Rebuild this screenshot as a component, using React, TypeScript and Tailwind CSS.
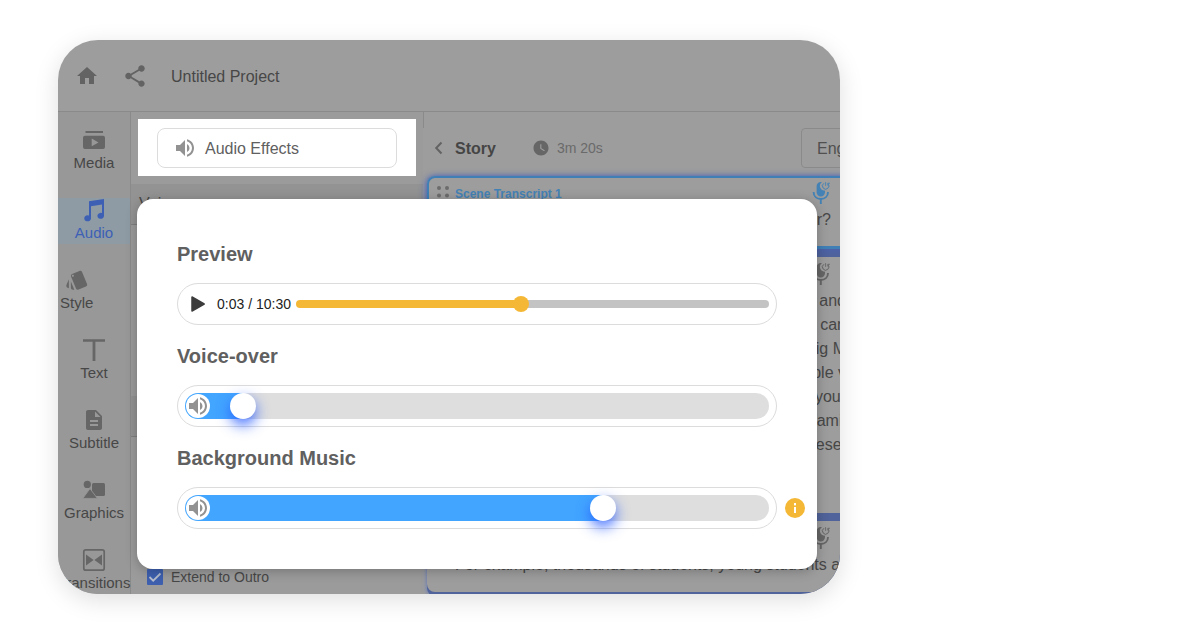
import { useState } from "react";
import type { CSSProperties, ReactNode } from "react";
import { MdDescription, MdHome, MdShare, MdStyle, MdVolumeUp, MdWatchLater } from "react-icons/md";

function Glyph({ children }: { children: ReactNode }) {
  return (
    <svg viewBox="0 0 24 24" className="size-6" fill="currentColor" aria-hidden="true">
      {children}
    </svg>
  );
}

const tools: { label: string; icon: ReactNode; active?: boolean; narrow?: boolean }[] = [
  {
    label: "Media",
    icon: (
      <Glyph>
        <rect x="3.5" y="3" width="17.5" height="2" />
        <path
          fillRule="evenodd"
          d="M3 7.7h18a2 2 0 0 1 2 2V19a2 2 0 0 1-2 2H3a2 2 0 0 1-2-2V9.7a2 2 0 0 1 2-2zM9.7 10.6v7.6l6.8-3.8z"
        />
      </Glyph>
    ),
  },
  {
    label: "Audio",
    active: true,
    icon: (
      <Glyph>
        <path d="M7 3.2 22 1v17a3.3 3 0 1 1-2-2.9V6.6L9 8.2v12.3a3.4 3 0 1 1-2-2.9z" />
      </Glyph>
    ),
  },
  { label: "Style", narrow: true, icon: <MdStyle className="size-6" /> },
  {
    label: "Text",
    icon: (
      <Glyph>
        <path d="M1 1.2h22v2.6h-9.6V23h-2.8V3.8H1z" />
      </Glyph>
    ),
  },
  { label: "Subtitle", icon: <MdDescription className="size-6" /> },
  {
    label: "Graphics",
    icon: (
      <Glyph>
        <rect x="10" y="5" width="13" height="13" rx="1.5" />
        <circle cx="5.3" cy="6.4" r="3.6" />
        <path d="M8 10.6 15.4 20.4H.8z" stroke="#989898" strokeWidth="0.8" />
      </Glyph>
    ),
  },
  {
    label: "Transitions",
    icon: (
      <Glyph>
        <rect x="1.8" y="1.8" width="20.4" height="20.4" rx="2" fill="none" stroke="currentColor" strokeWidth="1.7" />
        <path d="M4 6.6 11.6 12 4 17.4zM20 6.6 12.4 12 20 17.4z" />
      </Glyph>
    ),
  },
];

function MicIcon() {
  return (
    <svg viewBox="0 0 18 24" className="h-6 w-[18px]" fill="none" stroke="currentColor" aria-hidden="true">
      <path
        d="M8.8 1a4.200 4.200 0 0 0-4.200 4.200v6a4.200 4.200 0 0 0 8.400 0V9.600A4.600 4.600 0 0 1 10 1.200z"
        fill="currentColor"
        stroke="none"
      />
      <path d="M1.6 11c0 4.400 3.200 7 7.200 7s7.200-2.600 7.200-7" strokeWidth="1.900" />
      <path d="M8.800 18v5" strokeWidth="1.900" />
      <path d="M11.900 2.300a3.200 3.200 0 1 0 4 .4" strokeWidth="1" />
      <path d="M13.600 4.800V1.200M15.900 4.600V2.300h2" strokeWidth="0.900" />
    </svg>
  );
}

function Scene({ title, active, children }: { title: string; active?: boolean; children: ReactNode }) {
  return (
    <article
      className={
        active
          ? "rounded-lg border-b border-[#3f7fb6] bg-[#9d9d9d] pb-4 shadow-[0_2px_8px_#4c61ad] ring-2 ring-[#3f7fb6] ring-inset"
          : "rounded-lg bg-[#9d9d9d]"
      }
    >
      <header
        className={
          active
            ? "flex h-8 items-center gap-1 pl-2 text-[#4482b5]"
            : "flex h-8 items-center gap-1 pl-2 text-[#666]"
        }
      >
        <svg viewBox="0 0 16 16" className="size-4 fill-[#6c6c6c]" aria-hidden="true">
          <circle cx="4" cy="4" r="2" />
          <circle cx="12" cy="4" r="2" />
          <circle cx="4" cy="11.500" r="2" />
          <circle cx="12" cy="11.500" r="2" />
        </svg>
        <h3 className="flex-1 pt-1 text-xs font-bold">{title}</h3>
        <button type="button" aria-label="Record voice" className="mr-5 pt-0.5">
          <MicIcon />
        </button>
      </header>
      {children}
    </article>
  );
}

const sceneLines = ["and", "can", "Big M", "people v", "your", "famil", "these\u00a0"];

function VolumeSlider({
  id,
  label,
  initial,
  note,
}: {
  id: string;
  label: string;
  initial: number;
  note?: ReactNode;
}) {
  const [value, setValue] = useState(initial);
  const fill = { "--fill": `calc(13px + (100% - 26px) * ${value / 1000})` } as CSSProperties;
  return (
    <section className="flex flex-col gap-3.5">
      <label htmlFor={id} className="text-xl leading-[30px] font-bold text-[#606060]">
        {label}
      </label>
      <div className="relative flex h-[42px] items-center rounded-full border border-[#dcdcdc] px-[7px]">
        <input
          id={id}
          type="range"
          min={0}
          max={1000}
          value={value}
          onChange={(e) => setValue(Number(e.target.value))}
          style={fill}
          className="h-[26px] w-full cursor-pointer appearance-none rounded-full bg-[linear-gradient(to_right,#42a5ff_var(--fill),#dedede_var(--fill))] [&::-webkit-slider-thumb]:size-[26px] [&::-webkit-slider-thumb]:appearance-none [&::-webkit-slider-thumb]:rounded-full [&::-webkit-slider-thumb]:bg-white [&::-webkit-slider-thumb]:shadow-[0_6px_14px_#2a5cffdd]"
        />
        <span className="pointer-events-none absolute left-2 flex size-6 items-center justify-center rounded-full bg-white text-[#929292]">
          <MdVolumeUp className="size-6" />
        </span>
        {note}
      </div>
    </section>
  );
}

function PreviewPlayer() {
  const [value, setValue] = useState(475);
  const fill = { "--fill": `calc(8px + (100% - 16px) * ${value / 1000})` } as CSSProperties;
  return (
    <section className="flex flex-col gap-3.5">
      <label htmlFor="preview" className="text-xl leading-[30px] font-bold text-[#606060]">
        Preview
      </label>
      <div className="flex h-[42px] items-center rounded-full border border-[#dcdcdc] pr-[7px] pl-3">
        <button type="button" aria-label="Play" className="mr-[11px]">
          <svg viewBox="0 0 16 18" className="h-[18px] w-4" aria-hidden="true">
            <path d="M2 2v14l12.200-7z" fill="#3c3c3c" stroke="#3c3c3c" strokeWidth="1.500" strokeLinejoin="round" />
          </svg>
        </button>
        <span className="mr-[5px] shrink-0 text-sm text-[#222]">0:03 / 10:30</span>
        <input
          id="preview"
          type="range"
          min={0}
          max={1000}
          value={value}
          onChange={(e) => setValue(Number(e.target.value))}
          style={fill}
          className="h-4 min-w-0 flex-1 cursor-pointer appearance-none bg-transparent [&::-webkit-slider-runnable-track]:h-2 [&::-webkit-slider-runnable-track]:rounded-full [&::-webkit-slider-runnable-track]:bg-[linear-gradient(to_right,#f5b836_var(--fill),#c3c3c3_var(--fill))] [&::-webkit-slider-thumb]:-mt-1 [&::-webkit-slider-thumb]:size-4 [&::-webkit-slider-thumb]:appearance-none [&::-webkit-slider-thumb]:rounded-full [&::-webkit-slider-thumb]:bg-[#f5b836]"
        />
      </div>
    </section>
  );
}

export default function App() {
  return (
    <main className="h-screen overflow-hidden bg-white pt-10 pr-[30%] pb-[46px] pl-[58px] font-['Liberation_Sans',Arial,sans-serif]">
      <div className="relative flex h-full flex-col overflow-hidden rounded-[40px] bg-[#9d9d9d] text-[#474747] shadow-[0_6px_24px_rgba(0,0,0,0.13)]">
        <header className="flex h-[72px] shrink-0 items-center gap-[23px] border-b border-[#8a8a8a] pl-[17px]">
          <a href="#home" aria-label="Home" className="text-[#636363]">
            <MdHome className="size-6" />
          </a>
          <button type="button" aria-label="Share" className="text-[#636363]">
            <MdShare className="size-[26px]" />
          </button>
          <h1 className="pt-0.5 text-base">Untitled Project</h1>
        </header>

        <div className="flex min-h-0 flex-1">
          <nav className="flex w-[73px] shrink-0 flex-col gap-6 border-r border-[#8a8a8a] bg-[#989898] pt-4">
            {tools.map((tool) => (
              <a
                key={tool.label}
                href={`#${tool.label.toLowerCase()}`}
                className={
                  tool.active
                    ? "flex flex-col items-center bg-[#8e9ba5] text-[#3d60b5]"
                    : tool.narrow
                      ? "flex flex-col items-center self-start pl-0.5 text-[#666]"
                      : "flex flex-col items-center text-[#666]"
                }
              >
                {tool.icon}
                <span
                  className={tool.active ? "text-[15px] leading-[22px]" : "text-[15px] leading-[22px] text-[#474747]"}
                >
                  {tool.label}
                </span>
              </a>
            ))}
          </nav>

          <aside className="w-[292px] shrink-0 bg-[#9b9b9b] pt-[7px]">
            <div className="mr-[7px] ml-[7px] bg-white px-[19px] pt-[9px] pb-2">
              <button
                type="button"
                className="flex h-10 w-full items-center gap-2 rounded-lg border border-[#dcdcdc] pl-[15px] text-base text-[#606060]"
              >
                <MdVolumeUp className="size-6 text-[#929292]" />
                <span className="pt-0.5">Audio Effects</span>
              </button>
            </div>
            <h2 className="mt-2 h-[41px] border-b border-[#7f7f7f] bg-[#939393] pl-2 text-base leading-10">
              Voice-over
            </h2>
            <h2 className="mt-[171px] h-[41px] border-b border-[#7f7f7f] bg-[#939393] pl-2 text-base leading-10">
              Music
            </h2>
            <label className="mt-[130px] flex h-5 items-center gap-2 pl-4 text-sm">
              <span className="relative flex">
                <input
                  type="checkbox"
                  defaultChecked
                  className="peer size-4 appearance-none rounded-[1px] bg-[#7b7b7b] checked:bg-[#3d5fae]"
                />
                <svg
                  viewBox="0 0 16 16"
                  className="pointer-events-none absolute inset-0 hidden size-4 peer-checked:block"
                  fill="none"
                  stroke="#b4bccd"
                  strokeWidth="1.800"
                  aria-hidden="true"
                >
                  <path d="m2.500 8 3.700 3.700L13.500 4.500" />
                </svg>
              </span>
              Extend to Outro
            </label>
          </aside>

          <section className="min-w-0 flex-1">
            <div className="h-4 border-l border-[#8a8a8a]" />
            <div className="flex h-10 items-center">
              <button type="button" className="flex items-center gap-[11px] pl-[11px] text-base font-bold">
                <svg viewBox="0 0 10 16" className="h-4 w-2.5" fill="none" stroke="#636363" strokeWidth="2" aria-hidden="true">
                  <path d="M7.500 2.500 2.200 8l5.300 5.500" />
                </svg>
                <span className="pt-0.5 text-[#454545]">Story</span>
              </button>
              <span className="ml-[36px] flex flex-1 items-center gap-[7px] text-sm text-[#6a6a6a]">
                <MdWatchLater className="size-[18px] text-[#666]" />
                3m 20s
              </span>
              <select
                aria-label="Language"
                className="-mr-[81px] h-10 w-[120px] shrink-0 appearance-none rounded-sm border border-[#8a8a8a] pt-0.5 pl-[15px] text-base text-[#505050]"
              >
                <option>English</option>
              </select>
            </div>

            <div className="mt-2 -mr-2.5 ml-1 flex flex-col gap-2 rounded-lg bg-[#50639a] pb-1 shadow-[0_0_5px_#5c74bb]">
              <Scene title="Scene Transcript 1" active>
                <p className="pr-[19px] text-right text-base leading-6">or?</p>
              </Scene>
              <Scene title="Scene Transcript 2">
                <div className="pr-1 pb-14 text-right text-base leading-6">
                  {sceneLines.map((line) => (
                    <p key={line}>{line}</p>
                  ))}
                </div>
              </Scene>
              <Scene title="Scene Transcript 3">
                <p className="overflow-hidden pb-[15px] pl-7 text-base leading-6 whitespace-nowrap">
                  For example, thousands of students, young students a
                </p>
              </Scene>
            </div>
          </section>
        </div>

        <div
          role="dialog"
          aria-label="Audio levels"
          className="absolute top-[159px] right-[23px] left-[79px] flex flex-col gap-4 rounded-2xl bg-white p-10 shadow-[0_2px_12px_rgba(0,0,0,0.25)]"
        >
          <PreviewPlayer />
          <VolumeSlider id="voice" label="Voice-over" initial={80} />
          <VolumeSlider
            id="music"
            label="Background Music"
            initial={726}
            note={
              <button
                type="button"
                aria-label="About background music"
                className="absolute -right-[29px] size-5 rounded-full bg-[#f5b836]"
              >
                <svg viewBox="0 0 20 20" className="size-5" fill="white" aria-hidden="true">
                  <rect x="9" y="5" width="2" height="2.400" />
                  <rect x="9" y="9" width="2" height="6" />
                </svg>
              </button>
            }
          />
        </div>
      </div>
    </main>
  );
}
